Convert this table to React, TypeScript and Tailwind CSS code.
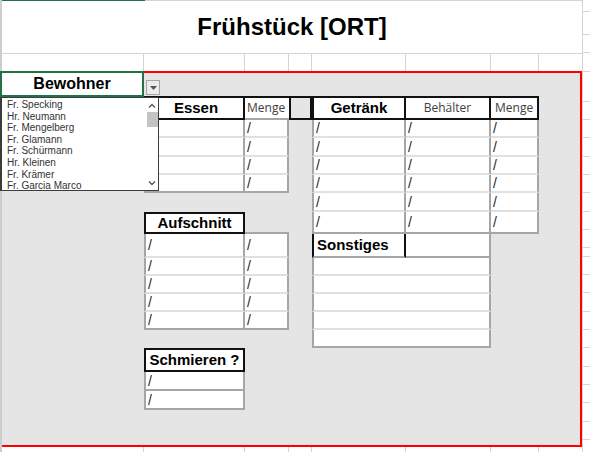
import { Fragment } from "react";

const SHEET_COLS = "grid-cols-[142px_101px_44px_23px_94px_85px_48px_41px]";
const SHEET_ROWS =
  "grid-rows-[23px_24px_18px_19px_18px_18px_19px_22px_24px_18px_18px_18px_18px_18px_24px_19px_19px_35px]";

const RESIDENTS = [
  "Fr. Specking",
  "Hr. Neumann",
  "Fr. Mengelberg",
  "Fr. Glamann",
  "Fr. Schürmann",
  "Hr. Kleinen",
  "Fr. Krämer",
  "Fr. Garcia Marco",
];

// y positions of the gridlines right of the frame
const RIGHT_LINES = [12, 35, 53, 72, 102, 120, 138, 157, 175, 193, 212, 230, 248, 257, 275, 293, 312, 330, 348, 367, 385, 403, 422, 440];

const GRAY = "border-[#a6a6a6]";

function Slash() {
  return <span className="pl-[2px] text-[14px] leading-none text-[#1f1f1f]">/</span>;
}

function DataCell({ first, last, slash }: { first?: boolean; last?: boolean; slash?: boolean }) {
  const left = first ? "border-l-2 border-l-[#a6a6a6]" : "";
  const bottom = last ? "border-b-[#a6a6a6]" : "border-b-[#e1e1e1]";
  return (
    <div className={`flex items-center border-r-2 border-b-2 border-r-[#a6a6a6] bg-white ${bottom} ${left}`}>
      {slash && <Slash />}
    </div>
  );
}

function Gridlines() {
  return (
    <div className={`grid h-full ${SHEET_COLS}`}>
      <div className="border-r border-[#d4d4d4]" />
      <div className="border-r border-[#d4d4d4]" />
      <div className="border-r border-[#d4d4d4]" />
      <div className="border-r border-[#d4d4d4]" />
      <div className="border-r border-[#d4d4d4]" />
      <div className="border-r border-[#d4d4d4]" />
      <div className="border-r border-[#d4d4d4]" />
      <div />
    </div>
  );
}

function ResidentDropdown() {
  return (
    <div className="absolute left-[-2px] top-[24px] z-10 flex h-[94px] w-[159px] border border-l-2 border-[#3c3c3c] bg-white">
      <div className="flex flex-1 flex-col pl-[5px] pt-px text-[10px] leading-[11.6px] text-[#333]">
        {RESIDENTS.map((name) => (
          <div key={name} className="h-[11.6px] whitespace-nowrap">
            {name}
          </div>
        ))}
      </div>
      <div className="flex w-[12px] flex-col items-center">
        <div className="flex h-[14px] items-center">
          <svg width="8" height="5" viewBox="0 0 8 5">
            <polyline points="1,4.5 4,1.5 7,4.5" fill="none" stroke="#555" strokeWidth="1.3" />
          </svg>
        </div>
        <div className="h-[15px] w-[11px] bg-[#c4c4c4]" />
        <div className="flex-1" />
        <div className="flex h-[14px] items-center">
          <svg width="8" height="5" viewBox="0 0 8 5">
            <polyline points="1,0.5 4,3.5 7,0.5" fill="none" stroke="#555" strokeWidth="1.3" />
          </svg>
        </div>
      </div>
    </div>
  );
}

function EssenTable() {
  return (
    <div className="col-span-3 col-start-2 row-span-5 row-start-2 grid grid-cols-subgrid grid-rows-subgrid">
      <div className="flex items-center justify-center border-2 border-[#111] bg-white pl-[3px] text-[15px] font-bold">Essen</div>
      <div className="flex items-center border-t-2 border-b-2 border-t-[#111] border-b-[#a6a6a6] bg-white pl-[2px] font-['Open_Sans',sans-serif] text-[12px] text-[#404040]">
        Menge
      </div>
      <div className="border-2 border-[#111]" />
      {[0, 1, 2, 3].map((i) => (
        <Fragment key={i}>
          <DataCell first last={i === 3} />
          <DataCell last={i === 3} slash />
          <div />
        </Fragment>
      ))}
    </div>
  );
}

function GetraenkTable() {
  return (
    <div className="col-span-3 col-start-5 row-span-7 row-start-2 grid grid-cols-subgrid grid-rows-subgrid">
      <div className="flex items-center justify-center border-2 border-[#111] bg-white text-[15px] font-bold">Getränk</div>
      <div className="flex items-center justify-center border-y-2 border-r-2 border-[#111] bg-white font-['Open_Sans',sans-serif] text-[12px] text-[#404040]">
        Behälter
      </div>
      <div className="flex items-center border-y-2 border-r-2 border-[#111] bg-white pl-[4px] font-['Open_Sans',sans-serif] text-[12px] text-[#404040]">
        Menge
      </div>
      {[0, 1, 2, 3, 4, 5].map((i) => (
        <Fragment key={i}>
          <DataCell first last={i === 5} slash />
          <DataCell last={i === 5} slash />
          <DataCell last={i === 5} slash />
        </Fragment>
      ))}
    </div>
  );
}

function SonstigesTable() {
  return (
    <div className="col-span-2 col-start-5 row-span-6 row-start-9 grid grid-cols-subgrid grid-rows-subgrid">
      <div className="flex items-center border-x-2 border-b-2 border-x-[#111] border-b-[#a6a6a6] bg-white pl-[3px] text-[15px] font-bold">
        Sonstiges
      </div>
      <div className={`border-r-2 border-b-2 ${GRAY} bg-white`} />
      {[0, 1, 2, 3, 4].map((i) => (
        <div
          key={i}
          className={`col-span-2 border-x-2 border-b-2 border-x-[#a6a6a6] bg-white ${i === 4 ? "border-b-[#a6a6a6]" : "border-b-[#e1e1e1]"}`}
        />
      ))}
    </div>
  );
}

function AufschnittTable() {
  return (
    <div className="col-span-2 col-start-2 row-span-6 row-start-8 grid grid-cols-subgrid grid-rows-subgrid">
      <div className="flex items-center justify-center border-2 border-[#111] bg-white text-[15px] font-bold">Aufschnitt</div>
      <div className="border-b-2 border-[#a6a6a6]" />
      {[0, 1, 2, 3, 4].map((i) => (
        <Fragment key={i}>
          <DataCell first last={i === 4} slash />
          <DataCell last={i === 4} slash />
        </Fragment>
      ))}
    </div>
  );
}

function SchmierenTable() {
  return (
    <div className="col-start-2 row-span-3 row-start-15 grid grid-cols-subgrid grid-rows-subgrid">
      <div className="flex items-center justify-center border-2 border-[#111] bg-white text-[15px] font-bold">Schmieren ?</div>
      <DataCell first last slash />
      <DataCell first last slash />
    </div>
  );
}

export default function App() {
  return (
    <div className="flex h-[452px] w-[590px] overflow-hidden bg-white font-['Liberation_Sans',Arial,sans-serif] text-black">
      <div className="w-[2px] shrink-0 bg-[#cdcdcd]" />

      <div className="flex w-[580px] shrink-0 flex-col">
        <div className="flex h-px">
          <div className="w-[143px] bg-[#217346]" />
          <div className="flex-1 bg-[#d4d4d4]" />
        </div>
        <div className="flex h-[53px] items-center justify-center border-b border-[#d4d4d4] text-[24px] font-bold">
          Frühstück [ORT]
        </div>
        <div className="h-[17px]">
          <Gridlines />
        </div>

        <div className="relative h-[376px] border-2 border-l-0 border-[#ff0000] bg-[#e5e5e5]">
          <div className={`grid h-full ${SHEET_COLS} ${SHEET_ROWS}`}>
            <div className="col-start-1 row-start-1 -mt-[2px] -mb-px -ml-[2px] flex items-center justify-center border-2 border-[#217346] bg-white text-[16px] font-bold">
              Bewohner
            </div>
            <div className="col-start-2 row-start-1 mb-px ml-[2px] flex h-[15px] w-[14px] items-center justify-center self-end border border-[#a6a6a6] bg-[#ececec]">
              <svg width="7" height="4" viewBox="0 0 7 4">
                <polygon points="0,0 7,0 3.5,4" fill="#555" />
              </svg>
            </div>
            <EssenTable />
            <GetraenkTable />
            <SonstigesTable />
            <AufschnittTable />
            <SchmierenTable />
          </div>
          <ResidentDropdown />
        </div>

        <div className="h-[5px]">
          <Gridlines />
        </div>
      </div>

      <div className="flex flex-1 flex-col border-l border-[#d4d4d4]">
        {RIGHT_LINES.map((y, i) => (
          <div
            key={y}
            className="shrink-0 border-b border-[#d4d4d4]"
            style={{ height: y - (i === 0 ? 0 : RIGHT_LINES[i - 1]) }}
          />
        ))}
      </div>
    </div>
  );
}
